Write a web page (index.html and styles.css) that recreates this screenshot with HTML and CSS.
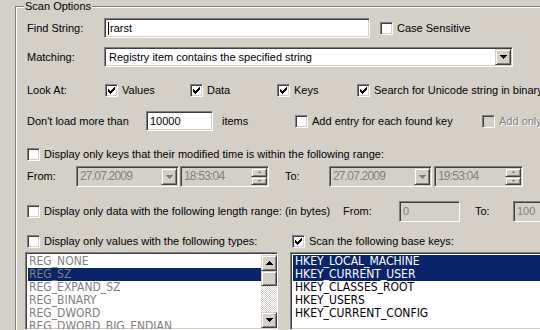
FILE: index.html
```html
<!DOCTYPE html>
<html>
<head>
<meta charset="utf-8">
<link rel="stylesheet" href="styles.css">
</head>
<body>
<div class="group">
  <div class="legend">Scan Options</div>

  <div class="row r1">
    <span class="lbl w77">Find String:</span>
    <div class="edit w266"><span class="caret"></span>rarst</div>
    <div class="cb ml10"><span class="box"></span>Case Sensitive</div>
  </div>

  <div class="row r2">
    <span class="lbl w77">Matching:</span>
    <div class="combo w409"><span class="ctext">Registry item contains the specified string</span>
      <span class="btn"><svg width="7" height="4" viewBox="0 0 7 4"><path d="M0 0h7v1h-1v1h-1v1h-1v1h-1v-1h-1v-1h-1v-1h-1z"/></svg></span>
    </div>
  </div>

  <div class="row r3">
    <span class="lbl w78">Look At:</span>
    <div class="cb w85"><span class="box"><svg width="11" height="11" viewBox="0 0 11 11"><path d="M8 2h1v1h-1z M7 3h2v1h-2z M2 4h1v1h-1z M6 4h3v1h-3z M2 5h2v1h-2z M5 5h3v1h-3z M2 6h5v1h-5z M3 7h3v1h-3z M4 8h1v1h-1z"/></svg></span>Values</div>
    <div class="cb w87"><span class="box"><svg width="11" height="11" viewBox="0 0 11 11"><path d="M8 2h1v1h-1z M7 3h2v1h-2z M2 4h1v1h-1z M6 4h3v1h-3z M2 5h2v1h-2z M5 5h3v1h-3z M2 6h5v1h-5z M3 7h3v1h-3z M4 8h1v1h-1z"/></svg></span>Data</div>
    <div class="cb w80"><span class="box"><svg width="11" height="11" viewBox="0 0 11 11"><path d="M8 2h1v1h-1z M7 3h2v1h-2z M2 4h1v1h-1z M6 4h3v1h-3z M2 5h2v1h-2z M5 5h3v1h-3z M2 6h5v1h-5z M3 7h3v1h-3z M4 8h1v1h-1z"/></svg></span>Keys</div>
    <div class="cb"><span class="box"><svg width="11" height="11" viewBox="0 0 11 11"><path d="M8 2h1v1h-1z M7 3h2v1h-2z M2 4h1v1h-1z M6 4h3v1h-3z M2 5h2v1h-2z M5 5h3v1h-3z M2 6h5v1h-5z M3 7h3v1h-3z M4 8h1v1h-1z"/></svg></span>Search for Unicode string in binary</div>
  </div>

  <div class="row r4">
    <span class="lbl w119">Don't load more than</span>
    <div class="edit w67">10000</div>
    <span class="lbl ml9 w73">items</span>
    <div class="cb w187"><span class="box"></span>Add entry for each found key</div>
    <div class="cb dis"><span class="box"></span>Add only</div>
  </div>

  <div class="row r5">
    <div class="cb"><span class="box"></span>Display only keys that their modified time is within the following range:</div>
  </div>

  <div class="row r6">
    <span class="lbl w49">From:</span>
    <div class="combo dis w103"><span class="ctext dtext">27.07.2009</span>
      <span class="btn"><svg width="7" height="4" viewBox="0 0 7 4"><path d="M0 0h7v1h-1v1h-1v1h-1v1h-1v-1h-1v-1h-1v-1h-1z"/></svg></span>
    </div>
    <div class="combo dis w89 ml1"><span class="ctext dtext">18:53:04</span>
      <span class="spin"><span class="btn"><svg width="3" height="2" viewBox="0 0 3 2"><path d="M1 0h1v1h1v1h-3v-1h1z"/></svg></span><span class="btn"><svg width="3" height="2" viewBox="0 0 3 2"><path d="M0 0h3v1h-1v1h-1v-1h-1z"/></svg></span></span>
    </div>
    <span class="lbl ml16 w44">To:</span>
    <div class="combo dis w103"><span class="ctext dtext">27.07.2009</span>
      <span class="btn"><svg width="7" height="4" viewBox="0 0 7 4"><path d="M0 0h7v1h-1v1h-1v1h-1v1h-1v-1h-1v-1h-1v-1h-1z"/></svg></span>
    </div>
    <div class="combo dis w89 ml2"><span class="ctext dtext">19:53:04</span>
      <span class="spin"><span class="btn"><svg width="3" height="2" viewBox="0 0 3 2"><path d="M1 0h1v1h1v1h-3v-1h1z"/></svg></span><span class="btn"><svg width="3" height="2" viewBox="0 0 3 2"><path d="M0 0h3v1h-1v1h-1v-1h-1z"/></svg></span></span>
    </div>
  </div>

  <div class="row r7">
    <div class="cb w316"><span class="box"></span>Display only data with the following length range: (in bytes)</div>
    <span class="lbl w56">From:</span>
    <div class="edit dis w61">0</div>
    <span class="lbl ml15 w38">To:</span>
    <div class="edit dis w61">100</div>
  </div>

  <div class="row r8">
    <div class="cb w265"><span class="box"></span>Display only values with the following types:</div>
    <div class="cb"><span class="box"><svg width="11" height="11" viewBox="0 0 11 11"><path d="M8 2h1v1h-1z M7 3h2v1h-2z M2 4h1v1h-1z M6 4h3v1h-3z M2 5h2v1h-2z M5 5h3v1h-3z M2 6h5v1h-5z M3 7h3v1h-3z M4 8h1v1h-1z"/></svg></span>Scan the following base keys:</div>
  </div>

  <div class="row r9">
    <div class="list w253 gray">
      <div class="items">
        <div class="item">REG_NONE</div>
        <div class="item sel">REG_SZ</div>
        <div class="item">REG_EXPAND_SZ</div>
        <div class="item">REG_BINARY</div>
        <div class="item">REG_DWORD</div>
        <div class="item">REG_DWORD_BIG_ENDIAN</div>
      </div>
      <div class="sb">
        <span class="btn sq"><svg width="7" height="4" viewBox="0 0 7 4"><path d="M3 0h1v1h1v1h1v1h1v1h-7v-1h1v-1h1v-1h1z"/></svg></span>
        <span class="btn thumb"></span>
        <span class="track"></span>
        <span class="btn sq"><svg width="7" height="4" viewBox="0 0 7 4"><path d="M0 0h7v1h-1v1h-1v1h-1v1h-1v-1h-1v-1h-1v-1h-1z"/></svg></span>
      </div>
    </div>
    <div class="list w260 ml12">
      <div class="items pad2">
        <div class="item sel">HKEY_LOCAL_MACHINE</div>
        <div class="item sel">HKEY_CURRENT_USER</div>
        <div class="item">HKEY_CLASSES_ROOT</div>
        <div class="item">HKEY_USERS</div>
        <div class="item">HKEY_CURRENT_CONFIG</div>
      </div>
    </div>
  </div>
</div>
</body>
</html>
```

FILE: styles.css
```css
* { box-sizing: border-box; }
html, body { margin: 0; padding: 0; }
body {
  width: 540px;
  height: 330px;
  overflow: hidden;
  background: #d4d0c8;
  color: #000;
  font: 11px/13px "Liberation Sans", Arial, sans-serif;
}
.group {
  position: relative;
  margin: 6px 0 0 15px;
  width: 580px;
  height: 340px;
  border-top: 1px solid #808080;
  border-left: 1px solid #808080;
  box-shadow: inset 1px 1px 0 #fff;
  padding-left: 11px;
}
.legend {
  position: absolute;
  top: -7px;
  left: 8px;
  padding: 0 1px;
  background: #d4d0c8;
}
.row { display: flex; align-items: center; white-space: nowrap; }
.r1 { margin-top: 11px; height: 20px; }
.r2 { margin-top: 9px; height: 20px; }
.r3 { margin-top: 13px; height: 20px; }
.r4 { margin-top: 11px; height: 20px; }
.r5 { margin-top: 14px; height: 19px; }
.r6 { margin-top: 2px; height: 21px; }
.r7 { margin-top: 14px; height: 21px; }
.r8 { margin-top: 10px; height: 19px; }
.r9 { margin-top: 1px; height: 78px; margin-left: -2px; align-items: flex-start; }

.lbl { flex: none; }
.w38 { width: 38px; } .w44 { width: 44px; } .w49 { width: 49px; } .w56 { width: 56px; }
.w61 { width: 61px; } .w67 { width: 67px; } .w73 { width: 73px; } .w77 { width: 77px; }
.w78 { width: 78px; } .w80 { width: 80px; } .w85 { width: 85px; } .w87 { width: 87px; }
.w89 { width: 89px; } .w103 { width: 103px; } .w119 { width: 119px; } .w187 { width: 187px; }
.w253 { width: 253px; } .w260 { width: 260px; } .w265 { width: 265px; } .w266 { width: 266px; }
.w316 { width: 316px; } .w409 { width: 409px; }
.ml1 { margin-left: 1px; } .ml2 { margin-left: 2px; } .ml9 { margin-left: 9px; }
.ml10 { margin-left: 10px; } .ml12 { margin-left: 12px; } .ml15 { margin-left: 15px; } .ml16 { margin-left: 16px; }

.cb { display: flex; align-items: center; gap: 4px; flex: none; }
.box {
  flex: none;
  width: 13px;
  height: 13px;
  background: #fff;
  border: 1px solid;
  border-color: #808080 #fff #fff #808080;
  box-shadow: inset 1px 1px 0 #404040, inset -1px -1px 0 #d4d0c8;
}
.box svg { display: block; fill: #000; }
.cb.dis { color: #808080; text-shadow: 1px 1px 0 #fff; }
.cb.dis .box { background: #d4d0c8; }

.edit, .combo, .list {
  flex: none;
  border: 1px solid;
  border-color: #808080 #fff #fff #808080;
  box-shadow: inset 1px 1px 0 #404040, inset -1px -1px 0 #d4d0c8;
  background: #fff;
}
.edit { height: 20px; display: flex; align-items: center; padding: 0 3px; }
.edit.dis { background: #d4d0c8; color: #808080; height: 21px; }
.caret { width: 1px; height: 13px; background: #000; margin-right: 1px; }

.combo { height: 20px; display: flex; align-items: stretch; padding: 1px; }
.combo.dis { height: 21px; background: #d4d0c8; color: #808080; }
.ctext { flex: 1; display: flex; align-items: center; padding-left: 3px; overflow: hidden; }
.dtext { font-size: 12px; letter-spacing: -0.8px; padding-left: 2px; }

.btn {
  flex: none;
  width: 16px;
  display: flex;
  align-items: center;
  justify-content: center;
  background: #d4d0c8;
  border: 1px solid;
  border-color: #d4d0c8 #404040 #404040 #d4d0c8;
  box-shadow: inset 1px 1px 0 #fff, inset -1px -1px 0 #808080;
}
.btn svg { display: block; fill: #000; }
.combo.dis .btn svg { fill: #808080; }
.spin { flex: none; width: 16px; display: flex; flex-direction: column; }
.spin .btn { flex: 1; }

.list { height: 78px; display: flex; overflow: hidden; padding: 2px 0 0 2px; }
.items { flex: 1; padding-top: 0; font: 12px/13px "DejaVu Sans Condensed", "DejaVu Sans", sans-serif; font-stretch: condensed; }
.item { height: 13px; padding-left: 1px; white-space: nowrap; }
.pad2 .item { padding-left: 2px; }
.gray .item { color: #808080; }
.sel { background: #0a246a; color: #fff; }
.gray .sel { color: #808080; }
.sb { flex: none; width: 16px; display: flex; flex-direction: column; height: 73px; }
.sb .sq { height: 16px; }
.sb .thumb { height: 15px; }
.track {
  flex: 1;
  background-image: conic-gradient(#fff 25%, #d4d0c8 0 50%, #fff 0 75%, #d4d0c8 0);
  background-size: 2px 2px;
}
```
